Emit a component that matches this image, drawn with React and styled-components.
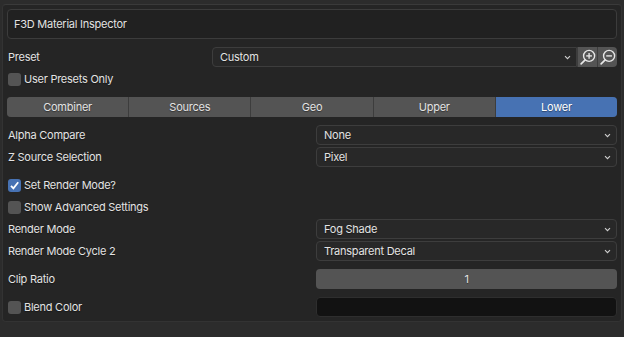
import styled, { createGlobalStyle } from 'styled-components';

const GlobalStyle = createGlobalStyle`
    html, body {
        margin: 0;
        padding: 0;
        background: #2c2c2c;
    }
    body {
        font-family: Inter, "DejaVu Sans", sans-serif;
        font-size: 11px;
        letter-spacing: -0.25px;
        color: #e3e3e3;
        text-shadow: 0 1px 1px rgba(0, 0, 0, 0.4);
    }
`;

const Panel = styled.div`
    margin: 4px 2px 0;
    padding: 4px 4px 4px;
    background: #252525;
    border: 1px solid #333;
    border-top-color: #3a3a3a;
    border-radius: 4px;
    display: flex;
    flex-direction: column;
`;

const Header = styled.div`
    height: 28px;
    display: flex;
    align-items: center;
    padding: 0 6px;
    background: #212121;
    border: 1px solid #3c3c3c;
    border-radius: 4px;
`;

const Row = styled.div`
    display: flex;
    align-items: center;
    height: 20px;
    margin-top: ${(p) => p.$mt}px;
`;

const Label = styled.div`
    flex: 1;
    padding-left: 1px;
    white-space: nowrap;
`;

const Field = styled.div`
    width: ${(p) => p.$w}px;
    height: 100%;
    display: flex;
    align-items: stretch;
`;

const Dropdown = styled.div`
    flex: 1;
    box-sizing: border-box;
    display: flex;
    align-items: center;
    justify-content: space-between;
    padding: 0 5px 0 7px;
    background: #282828;
    border: 1px solid #3d3d3d;
    border-radius: ${(p) => (p.$joined ? '4px 0 0 4px' : '4px')};
`;

const IconButton = styled.div`
    width: 20px;
    display: flex;
    align-items: center;
    justify-content: center;
    background: #545454;
    border-left: 1px solid #3d3d3d;
    border-radius: ${(p) => (p.$last ? '0 4px 4px 0' : '0')};
    box-sizing: border-box;
`;

const Check = styled.label`
    display: flex;
    align-items: center;
    gap: 3px;
`;

const Box = styled.span`
    width: 13px;
    height: 13px;
    border-radius: 3px;
    background: ${(p) => (p.$on ? '#4772b3' : '#545454')};
    display: flex;
    align-items: center;
    justify-content: center;
`;

const Tabs = styled.div`
    display: flex;
    height: 20px;
    margin-top: 8px;
    border-radius: 4px;
    overflow: hidden;
    background: #3d3d3d;
    gap: 1px;
`;

const Tab = styled.div`
    flex: 1;
    display: flex;
    align-items: center;
    justify-content: center;
    background: ${(p) => (p.$active ? '#4772b3' : '#545454')};
    color: ${(p) => (p.$active ? '#ffffff' : '#e3e3e3')};
`;

const Slider = styled.div`
    flex: 1;
    display: flex;
    align-items: center;
    justify-content: center;
    background: #545454;
    border-radius: 4px;
`;

const Swatch = styled.div`
    flex: 1;
    background: #121212;
    border: 1px solid #2e2e2e;
    border-radius: 4px;
`;

function Chevron() {
    return (
        <svg width="7" height="5" viewBox="0 0 7 5">
            <path d="M1 1.2 L3.5 3.7 L6 1.2" fill="none" stroke="#d0d0d0" strokeWidth="1.1" />
        </svg>
    );
}

function Zoom({ minus }) {
    return (
        <svg width="17" height="17" viewBox="0 0 16 16">
            <circle cx="9.5" cy="6.5" r="5.2" fill="none" stroke="#e6e6e6" strokeWidth="1.3" />
            <path d="M5.8 10.2 L2 14" stroke="#e6e6e6" strokeWidth="1.6" strokeLinecap="round" />
            <path d="M6.8 6.5 H12.2" stroke="#e6e6e6" strokeWidth="1.3" />
            {!minus && <path d="M9.5 3.8 V9.2" stroke="#e6e6e6" strokeWidth="1.3" />}
        </svg>
    );
}

function Tick() {
    return (
        <svg width="11" height="11" viewBox="0 0 11 11">
            <path d="M2 5.8 L4.4 8.3 L9.2 2.2" fill="none" stroke="#fff" strokeWidth="1.8" />
        </svg>
    );
}

function Select({ label, value, mt }) {
    return (
        <Row $mt={mt}>
            <Label>{label}</Label>
            <Field $w={301}>
                <Dropdown>
                    <span>{value}</span>
                    <Chevron />
                </Dropdown>
            </Field>
        </Row>
    );
}

function Toggle({ label, on, mt, children }) {
    return (
        <Row $mt={mt}>
            <Label>
                <Check>
                    <Box $on={on}>{on && <Tick />}</Box>
                    {label}
                </Check>
            </Label>
            {children}
        </Row>
    );
}

const tabs = ['Combiner', 'Sources', 'Geo', 'Upper', 'Lower'];

export default function App() {
    return (
        <>
            <GlobalStyle />
            <Panel>
                <Header>F3D Material Inspector</Header>
                <Row $mt={8}>
                    <Label>Preset</Label>
                    <Field $w={405}>
                        <Dropdown $joined>
                            <span>Custom</span>
                            <Chevron />
                        </Dropdown>
                        <IconButton><Zoom /></IconButton>
                        <IconButton $last><Zoom minus /></IconButton>
                    </Field>
                </Row>
                <Toggle label="User Presets Only" mt={2} />
                <Tabs>
                    {tabs.map((t) => (
                        <Tab key={t} $active={t === 'Lower'}>{t}</Tab>
                    ))}
                </Tabs>
                <Select label="Alpha Compare" value="None" mt={8} />
                <Select label="Z Source Selection" value="Pixel" mt={2} />
                <Toggle label="Set Render Mode?" on mt={8} />
                <Toggle label="Show Advanced Settings" mt={2} />
                <Select label="Render Mode" value="Fog Shade" mt={2} />
                <Select label="Render Mode Cycle 2" value="Transparent Decal" mt={2} />
                <Row $mt={8}>
                    <Label>Clip Ratio</Label>
                    <Field $w={301}>
                        <Slider>1</Slider>
                    </Field>
                </Row>
                <Toggle label="Blend Color" mt={8}>
                    <Field $w={301}>
                        <Swatch />
                    </Field>
                </Toggle>
            </Panel>
        </>
    );
}
